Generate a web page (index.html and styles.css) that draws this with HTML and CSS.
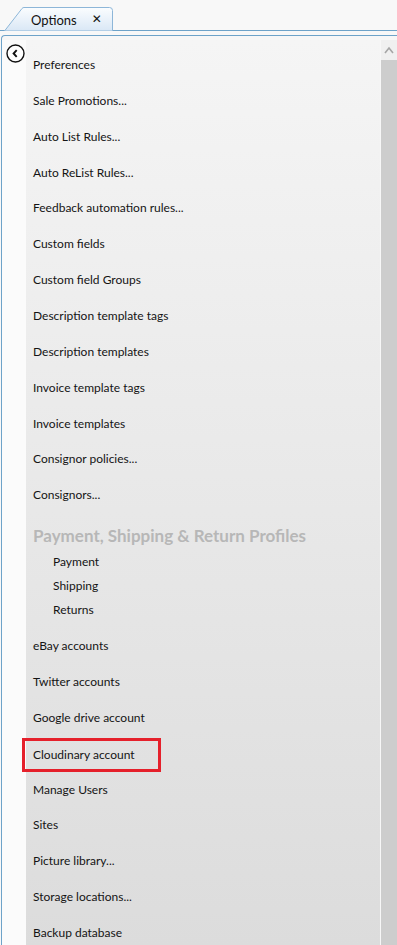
FILE: index.html
```html
<!DOCTYPE html>
<html lang="en">
<head>
  <meta charset="UTF-8" />
  <title>Options</title>
  <link rel="stylesheet" href="styles.css">
</head>
<body>
  <div class="tabstrip">
    <div class="tab">
      <svg class="tab-shape" width="110" height="24" viewBox="0 0 110 24">
        <defs>
          <linearGradient id="tabFill" x1="0" y1="0" x2="0" y2="1">
            <stop offset="0" stop-color="#fbfdff"/>
            <stop offset="1" stop-color="#d9e7f5"/>
          </linearGradient>
        </defs>
        <path d="M0.5 24 L18 1.5 Q18.8 0.5 20 0.5 L105.5 0.5 Q108.5 0.5 108.5 3.5 L108.5 24 Z" fill="url(#tabFill)" stroke="#8db6d8" stroke-width="1"/>
      </svg>
      <span class="tab-title">Options</span>
      <span class="tab-close">&#x2715;</span>
    </div>
  </div>

  <div class="panel">
    <div class="panel-inner">
      <div class="gutter">
        <div class="back-btn">
          <svg width="19" height="19" viewBox="0 0 19 19">
            <circle cx="9.5" cy="9.5" r="8.5" fill="#fff" stroke="#111" stroke-width="1.4"/>
            <path d="M10.7 6.2 L7.6 9.5 L10.7 12.8" fill="none" stroke="#111" stroke-width="1.9"/>
          </svg>
        </div>
      </div>

      <div class="list">
        <div class="item">Preferences</div>
        <div class="item">Sale Promotions...</div>
        <div class="item">Auto List Rules...</div>
        <div class="item">Auto ReList Rules...</div>
        <div class="item">Feedback automation rules...</div>
        <div class="item">Custom fields</div>
        <div class="item">Custom field Groups</div>
        <div class="item">Description template tags</div>
        <div class="item">Description templates</div>
        <div class="item">Invoice template tags</div>
        <div class="item">Invoice templates</div>
        <div class="item">Consignor policies...</div>
        <div class="item">Consignors...</div>

        <div class="group-title">Payment, Shipping &amp; Return Profiles</div>
        <div class="sub-item">Payment</div>
        <div class="sub-item">Shipping</div>
        <div class="sub-item">Returns</div>

        <div class="item first-after-group">eBay accounts</div>
        <div class="item">Twitter accounts</div>
        <div class="item">Google drive account</div>
        <div class="item"><span class="highlight">Cloudinary account</span></div>
        <div class="item">Manage Users</div>
        <div class="item">Sites</div>
        <div class="item">Picture library...</div>
        <div class="item">Storage locations...</div>
        <div class="item">Backup database</div>
      </div>

      <div class="scrollbar">
        <div class="scroll-up">
          <svg width="10" height="8" viewBox="0 0 10 8">
            <path d="M1 7 L5 2 L9 7" fill="none" stroke="#a6a6a6" stroke-width="1.6"/>
          </svg>
        </div>
        <div class="scroll-thumb"></div>
      </div>
    </div>
  </div>
</body>
</html>
```

FILE: styles.css
```css
body {
  margin: 0;
  width: 397px;
  height: 945px;
  overflow: hidden;
  background-color: #f8f8f8;
  font-family: Lato, "Open Sans", sans-serif;
  font-size: 12px;
  color: #141414;
}

.tabstrip {
  height: 30px;
  border-bottom: 1px solid #6ea3c9;
  display: flex;
  align-items: flex-end;
  padding-left: 4px;
}

.tab {
  position: relative;
  width: 110px;
  height: 24px;
  margin-bottom: -1px;
  display: flex;
  align-items: center;
  z-index: 1;
}

.tab-shape {
  position: absolute;
  left: 0;
  top: 0;
  z-index: -1;
}

.tab-title {
  margin-left: 27px;
  font-size: 13px;
  color: #111;
  padding-top: 1px;
}

.tab-close {
  margin-left: 15px;
  font-size: 12px;
  font-weight: bold;
  font-family: "DejaVu Sans", sans-serif;
  color: #111;
}

.panel {
  margin-top: 4px;
  margin-left: 1px;
  border-top: 1px solid #6ea3c9;
  border-left: 1px solid #6ea3c9;
  border-top-left-radius: 4px;
  background-color: #f7f7f7;
  padding-top: 4px;
  height: 910px;
}

.panel-inner {
  display: flex;
  height: 906px;
}

.gutter {
  width: 24px;
  background-color: #fbfbfb;
}

.back-btn {
  margin-top: 4px;
  margin-left: 4px;
  width: 19px;
  height: 19px;
}

.list {
  flex: 1;
  padding-top: 7px;
  padding-left: 7px;
  background: linear-gradient(#f5f5f5, #dcdcdc);
}

.item {
  height: 35.86px;
  line-height: 35.86px;
  white-space: nowrap;
}

.highlight {
  display: inline-block;
  box-sizing: border-box;
  width: 139px;
  height: 34px;
  line-height: 27px;
  margin-left: -11px;
  padding-left: 8px;
  border: 3px solid #e5202b;
  vertical-align: middle;
}

.group-title {
  padding-top: 12px;
  padding-bottom: 3px;
  line-height: 22px;
  font-size: 17px;
  font-weight: bold;
  color: #b7b7b7;
  white-space: nowrap;
}

.sub-item {
  height: 24px;
  line-height: 24px;
  padding-left: 20px;
}

.first-after-group {
  margin-top: 6px;
}

.scrollbar {
  width: 16px;
  margin-left: 1px;
  display: flex;
  flex-direction: column;
}

.scroll-up {
  height: 20px;
  background-color: #f0f0f0;
  display: flex;
  align-items: center;
  justify-content: center;
}

.scroll-thumb {
  flex: 1;
  background-color: #cdcdcd;
}
```
